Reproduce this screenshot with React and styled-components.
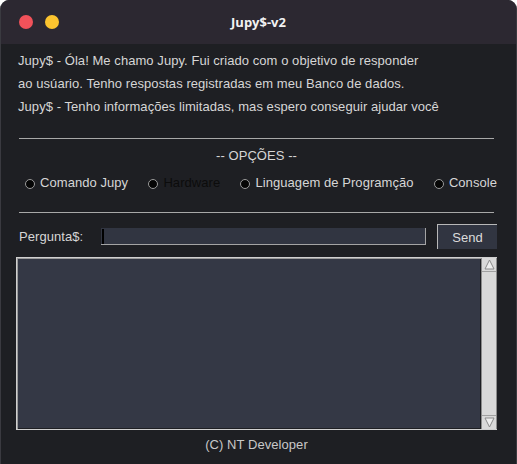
import React from 'react'
import styled, { createGlobalStyle } from 'styled-components'

const GlobalStyle = createGlobalStyle`
  html, body {
    margin: 0;
    padding: 0;
    background: #ffffff;
  }
  body {
    font-family: 'Liberation Sans', Arial, sans-serif;
  }
`

const options = [
  { label: 'Comando Jupy' },
  { label: 'Hardware', dim: true },
  { label: 'Linguagem de Programção' },
  { label: 'Console' },
]

const App = () => {
  return (
    <>
      <GlobalStyle />
      <Window>
        <TitleBar>
          <Dots>
            <Dot color="#f1525a" />
            <Dot color="#fcc42f" />
          </Dots>
          <Title>Jupy$-v2</Title>
          <span />
        </TitleBar>
        <Body>
          <Intro>
            <p>Jupy$ - Óla! Me chamo Jupy. Fui criado com o objetivo de responder</p>
            <p>ao usúario. Tenho respostas registradas em meu Banco de dados.</p>
            <p>Jupy$ - Tenho informações limitadas, mas espero conseguir ajudar você</p>
          </Intro>
          <Rule />
          <Heading>-- OPÇÕES --</Heading>
          <Options>
            {options.map((o) => (
              <Option key={o.label} $dim={o.dim}>
                <Radio />
                {o.label}
              </Option>
            ))}
          </Options>
          <Rule $gap={20} />
          <AskRow>
            <AskLabel>Pergunta$:</AskLabel>
            <Entry>
              <Caret />
            </Entry>
            <SendButton>Send</SendButton>
          </AskRow>
          <Output>
            <OutputText />
            <Scrollbar>
              <Arrow>
                <svg width="11" height="11" viewBox="0 0 11 11">
                  <path d="M5.5 1 L10 10 L1 10 Z" fill="#eeeeee" stroke="#8a8a8a" strokeWidth="1" />
                </svg>
              </Arrow>
              <Track />
              <Arrow>
                <svg width="11" height="11" viewBox="0 0 11 11">
                  <path d="M1 1 L10 1 L5.5 10 Z" fill="#eeeeee" stroke="#8a8a8a" strokeWidth="1" />
                </svg>
              </Arrow>
            </Scrollbar>
          </Output>
          <Footer>(C) NT Developer</Footer>
        </Body>
      </Window>
    </>
  )
}

export default App

const Window = styled.div`
  width: 517px;
  height: 464px;
  display: flex;
  flex-direction: column;
  background: #1e1f23;
  border-radius: 9px 9px 0 0;
  overflow: hidden;
  box-sizing: border-box;
  border-left: 1px solid #3a3a40;
  border-right: 1px solid #3a3a40;
`

const TitleBar = styled.div`
  height: 44px;
  flex: none;
  background: #2c2831;
  display: grid;
  grid-template-columns: 1fr auto 1fr;
  align-items: center;
`

const Dots = styled.div`
  display: flex;
  gap: 12px;
  padding-left: 18px;
`

const Dot = styled.span`
  width: 14px;
  height: 14px;
  border-radius: 50%;
  background: ${(p) => p.color};
`

const Title = styled.div`
  color: #f2f2f2;
  font-family: 'Open Sans', 'Noto Sans', sans-serif;
  font-weight: 700;
  font-size: 13px;
`

const Body = styled.div`
  flex: 1;
  display: flex;
  flex-direction: column;
  padding: 5px 19px 0 15px;
  color: #d6d6d6;
  font-size: 13px;
  letter-spacing: 0.06px;
`

const Intro = styled.div`
  padding-left: 2px;
  p {
    margin: 0;
    line-height: 23px;
    height: 23px;
  }
`

const Rule = styled.div`
  margin: ${(p) => p.$gap || 20}px 3px 0 3px;
  border-top: 1px solid #a8a8a8;
`

const Heading = styled.div`
  margin-top: 7px;
  height: 20px;
  line-height: 20px;
  text-align: center;
`

const Options = styled.div`
  margin-top: 6px;
  height: 20px;
  display: flex;
  justify-content: space-between;
  align-items: center;
  padding-left: 9px;
`

const Option = styled.label`
  display: flex;
  align-items: center;
  gap: 5px;
  color: ${(p) => (p.$dim ? '#0c0c0c' : '#d6d6d6')};
  white-space: nowrap;
`

const Radio = styled.span`
  width: 8px;
  height: 8px;
  margin-top: 3px;
  border-radius: 50%;
  background: #050505;
  border: 1px solid #9a9a9a;
`

const AskRow = styled.div`
  margin-top: 11px;
  display: flex;
  align-items: center;
  height: 25px;
`

const AskLabel = styled.div`
  width: 82px;
  padding-left: 3px;
  margin-top: -1px;
  flex: none;
`

const Entry = styled.div`
  width: 325px;
  height: 17px;
  box-sizing: border-box;
  background: #313541;
  border-right: 1px solid #a4a4a4;
  border-bottom: 1px solid #a4a4a4;
  display: flex;
  align-items: center;
  padding-left: 1px;
`

const Caret = styled.span`
  width: 2px;
  height: 15px;
  background: #000000;
`

const SendButton = styled.div`
  margin-left: auto;
  width: 60px;
  height: 25px;
  box-sizing: border-box;
  background: #313541;
  border-top: 1px solid #b8b8b8;
  border-left: 1px solid #b8b8b8;
  display: flex;
  align-items: center;
  justify-content: center;
  color: #dcdcdc;
`

const Output = styled.div`
  margin-top: 8px;
  height: 173px;
  box-sizing: border-box;
  display: flex;
  border: 1px solid #d0d0d0;
  border-right-width: 0;
  box-shadow: inset 1px 1px 0 #9a9a9a;
`

const OutputText = styled.div`
  flex: 1;
  background: #343845;
  margin: 1px;
`

const Scrollbar = styled.div`
  width: 14px;
  display: flex;
  flex-direction: column;
  background: #d9d9d9;
  border-left: 1px solid #8c8c8c;
  border-right: 1px solid #8c8c8c;
`

const Arrow = styled.div`
  height: 13px;
  display: flex;
  align-items: center;
  justify-content: center;
  border-bottom: 1px solid #a0a0a0;
  &:last-child {
    border-bottom: none;
    border-top: 1px solid #a0a0a0;
  }
`

const Track = styled.div`
  flex: 1;
  background: #d9d9d9;
`

const Footer = styled.div`
  padding-top: 1px;
  height: 27px;
  line-height: 27px;
  text-align: center;
  color: #c8c8c8;
`
